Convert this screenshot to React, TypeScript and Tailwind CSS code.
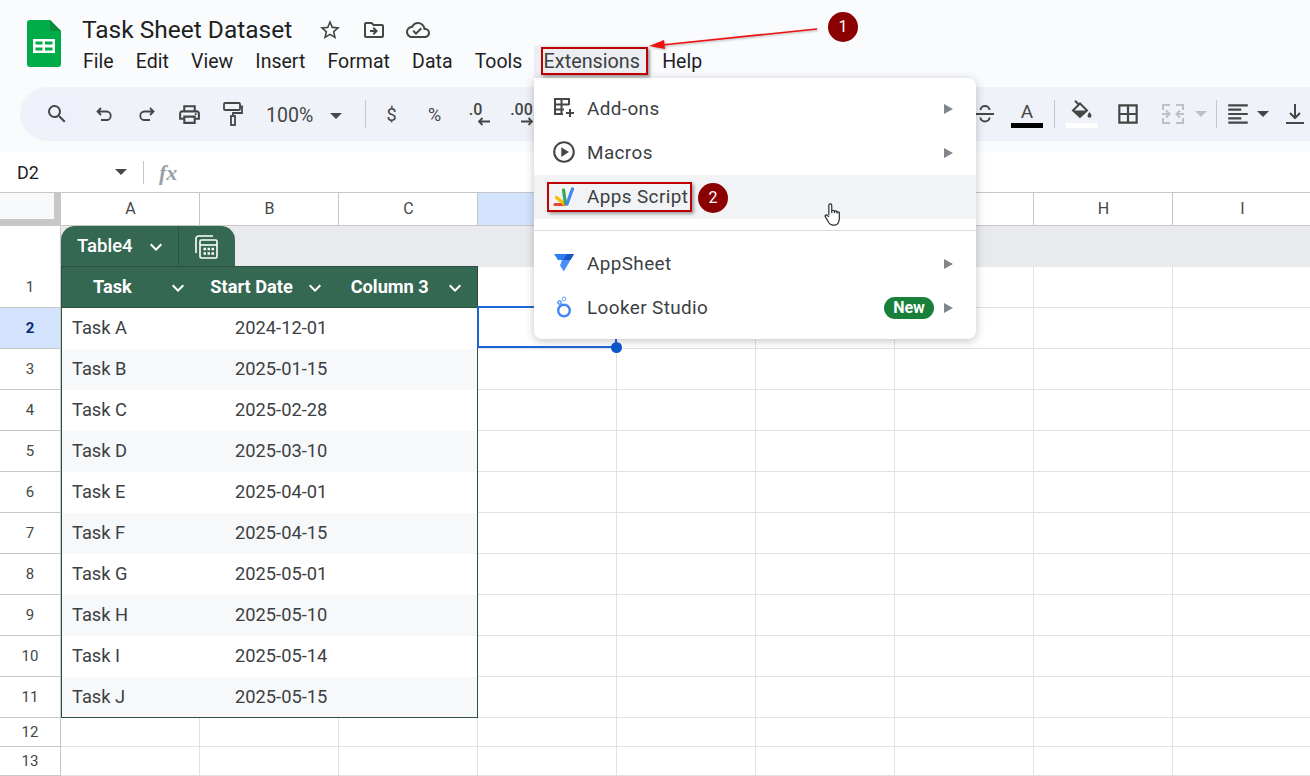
import { ReactNode } from "react";
import {
  MdBorderAll,
  MdFormatAlignLeft,
  MdKeyboardArrowDown,
  MdOutlineCloudDone,
  MdOutlineDriveFileMove,
  MdOutlinePrint,
  MdOutlinePlayCircle,
  MdSearch,
  MdStarBorder,
} from "react-icons/md";

const menus = ["File", "Edit", "View", "Insert", "Format", "Data", "Tools"];
const tasks = [
  ["Task A", "2024-12-01"],
  ["Task B", "2025-01-15"],
  ["Task C", "2025-02-28"],
  ["Task D", "2025-03-10"],
  ["Task E", "2025-04-01"],
  ["Task F", "2025-04-15"],
  ["Task G", "2025-05-01"],
  ["Task H", "2025-05-10"],
  ["Task I", "2025-05-14"],
  ["Task J", "2025-05-15"],
];

function Caret({ className = "" }: { className?: string }) {
  return (
    <svg width="12" height="6" viewBox="0 0 12 6" className={className}>
      <path d="M0 0h12L6 6z" fill="currentColor" />
    </svg>
  );
}

function SubArrow() {
  return (
    <svg width="9" height="10" viewBox="0 0 9 10" className="mt-px shrink-0">
      <path d="M0 0l9 5-9 5z" fill="#80868b" />
    </svg>
  );
}

function SheetsLogo() {
  return (
    <svg width="34" height="47" viewBox="0 0 34 47">
      <path d="M3 0h20l11 11v33a3 3 0 0 1-3 3H3a3 3 0 0 1-3-3V3a3 3 0 0 1 3-3z" fill="#00ac47" />
      <path d="M23 0l11 11H23z" fill="#0a8a3c" />
      <path d="M6 19h22v14H6z" fill="#fff" />
      <path d="M8.500 21.500h7v3h-7zM18 21.500h7.500v3H18zM8.500 27.500h7v3h-7zM18 27.500h7.500v3H18z" fill="#00ac47" />
    </svg>
  );
}

function AddonsIcon() {
  return (
    <svg width="22" height="22" viewBox="0 0 22 22" fill="none" stroke="#444746" strokeWidth="2">
      <path d="M16 8V2H2v15h8M2 7.500h14M2 12.500h9M8.500 2v15" />
      <path d="M17 12v8M13 16h8" />
    </svg>
  );
}

function AppsScriptLogo() {
  return (
    <svg width="22" height="20" viewBox="0 0 22 20" fill="none" strokeWidth="3.200" strokeLinecap="round">
      <path d="M2 17.500h10" stroke="#ea4335" />
      <path d="M3.500 10.500l8.500 7" stroke="#fbbc04" />
      <path d="M10.500 3l2 14" stroke="#34a853" />
      <path d="M19.500 2l-5.500 15" stroke="#4285f4" />
    </svg>
  );
}

function AppSheetLogo() {
  return (
    <svg width="20" height="18" viewBox="0 0 20 18">
      <path d="M0 0h20l-3.500 6H4z" fill="#2f7df6" />
      <path d="M13 0h7l-3.500 6H9z" fill="#1a56c4" />
      <path d="M8 6h8.500L9.800 17.500 6 11.500z" fill="#4a90f7" />
    </svg>
  );
}

function LookerLogo() {
  return (
    <svg width="16" height="22" viewBox="0 0 16 22" fill="none">
      <circle cx="8" cy="14.500" r="5.800" stroke="#4285f4" strokeWidth="2.400" />
      <circle cx="8" cy="3" r="1.800" stroke="#8ab4f8" strokeWidth="1.200" />
      <circle cx="3.600" cy="6.500" r="1.700" stroke="#4285f4" strokeWidth="1.300" />
    </svg>
  );
}

function MergeIcon() {
  return (
    <svg width="22" height="20" viewBox="0 0 22 20" fill="none" stroke="#bdc1c6" strokeWidth="2">
      <path d="M8 1H1v5M1 14v5h7M14 1h7v5M21 14v5h-7" />
      <path d="M0 10h7M4 6.500L7.500 10 4 13.500M22 10h-7M18 6.500L14.500 10l3.500 3.500" />
    </svg>
  );
}

function TableIcon() {
  return (
    <svg width="23" height="24" viewBox="0 0 23 24" fill="none" stroke="#fff" strokeWidth="1.600">
      <path d="M1 18V3.500A2.500 2.500 0 0 1 3.500 1H18" />
      <rect x="5" y="5" width="17" height="18" rx="1.500" />
      <path d="M5 10h17" />
      <path d="M8.500 14h2.500M12.500 14h2.500M16.500 14h2.500M8.500 18.500h2.500M12.500 18.500h2.500M16.500 18.500h2.500" strokeWidth="2.400" />
    </svg>
  );
}

function UndoIcon({ flip }: { flip?: boolean }) {
  return (
    <svg width="18" height="18" viewBox="0 0 18 18" fill="none" stroke="#444746" strokeWidth="1.800" className={flip ? "-scale-x-100" : ""}>
      <path d="M6 3L2.500 6.500 6 10M2.500 6.500H11.500a4.250 4.250 0 0 1 0 8.500H6" />
    </svg>
  );
}

function PaintIcon() {
  return (
    <svg width="20" height="24" viewBox="0 0 20 24" fill="none" stroke="#444746" strokeWidth="1.800">
      <rect x="1" y="1" width="16" height="7" rx="1" />
      <path d="M17 4.500h2v6.500H10v3" />
      <rect x="8" y="14" width="4" height="9" />
    </svg>
  );
}

function StrikeIcon() {
  return (
    <svg width="18" height="20" viewBox="0 0 18 20" fill="none" stroke="#444746" strokeWidth="2">
      <path d="M4.500 6a4.500 4 0 0 1 9 0M0 10h18M13.500 13.500a4.500 4 0 0 1-9 0" />
    </svg>
  );
}

function FillIcon() {
  return (
    <svg width="22" height="21" viewBox="0 0 22 21">
      <path d="M4 0.800l4 4" fill="none" stroke="#444746" strokeWidth="2" />
      <path d="M9 3.500l7 7-7 6.500-7-6.500z" fill="none" stroke="#444746" strokeWidth="2" />
      <path d="M2.500 10.500h13L9 17z" fill="#444746" />
      <path d="M18.500 12c1 1.600 2 2.600 2 3.800a2 2 0 0 1-4 0c0-1.200 1-2.200 2-3.800z" fill="#444746" />
    </svg>
  );
}

function VAlignIcon() {
  return (
    <svg width="18" height="20" viewBox="0 0 18 20" fill="none" stroke="#444746" strokeWidth="2">
      <path d="M9 0v14M4 9l5 5 5-5M0 19h18" />
    </svg>
  );
}

function HandCursor() {
  return (
    <svg width="16" height="25" viewBox="0 0 16.500 25" className="absolute left-[824px] top-[202px]">
      <path
        d="M5 13V3a1.500 1.500 0 0 1 3 0V11M8 9.500a1.400 1.400 0 0 1 2.800 0V11M10.800 10a1.300 1.300 0 0 1 2.600 0V11.500M13.400 11a1.200 1.200 0 0 1 2.400 0V17c0 3.500-2 6.500-5 6.500H9c-2 0-3-1-4-2.500L1.500 15c-1-1.500.5-2.800 2-1.500L5 15"
        fill="#fff"
        stroke="#1f2733"
        strokeWidth="1.200"
      />
    </svg>
  );
}

function ToolBtn({ children, className = "" }: { children: ReactNode; className?: string }) {
  return (
    <div className={`flex h-full w-[43px] shrink-0 items-center justify-center text-[#444746] ${className}`}>
      {children}
    </div>
  );
}

function DecimalBtn({ label, dir }: { label: string; dir: "left" | "right" }) {
  return (
    <ToolBtn>
      <div className="flex flex-col items-end pl-[2px]">
        <span className={`text-[16px] font-medium leading-[14px] ${dir === "left" ? "mr-[6px]" : ""}`}>{label}</span>
        <svg width="14" height="9" viewBox="0 0 14 9" fill="none" stroke="#444746" strokeWidth="1.800" className={dir === "left" ? "-mr-[3px]" : "-mr-[1px] -scale-x-100"}>
          <path d="M13 4.500H2M5.500 1L2 4.500 5.500 8" />
        </svg>
      </div>
    </ToolBtn>
  );
}

function ToolDivider({ className = "" }: { className?: string }) {
  return <div className={`h-[28px] w-px shrink-0 bg-[#c7c7c7] ${className}`} />;
}

function MenuItem({
  icon,
  label,
  badge,
  arrow,
  active,
}: {
  icon: ReactNode;
  label: string;
  badge?: boolean;
  arrow?: boolean;
  active?: boolean;
}) {
  return (
    <div className={`flex h-[44px] items-center pr-[23px] ${active ? "bg-[#f1f3f4]" : ""}`}>
      <div className="flex w-[53px] shrink-0 items-center justify-center pl-[6px]">{icon}</div>
      <span className={`${active ? "pt-px" : "pt-[3px]"} text-[18.900px] tracking-[0.4px] text-[#3c4043]`}>{label}</span>
      <div className="flex-1" />
      {badge && (
        <span className="mr-[10px] mt-[2px] flex h-[22px] w-[50px] items-center justify-center rounded-full bg-[#188038] text-[16px] font-bold text-white">
          New
        </span>
      )}
      {arrow && <SubArrow />}
    </div>
  );
}

function RowHead({ n, selected }: { n: number; selected?: boolean }) {
  return (
    <div
      className={`flex h-full w-[61px] shrink-0 items-center justify-center border-r border-b border-[#c7c7c7] text-[15px] ${
        selected ? "bg-[#d3e3fd] font-bold text-[#0b2a6b]" : "text-[#444746]"
      }`}
    >
      {n}
    </div>
  );
}

function BlankCells() {
  return (
    <>
      {[0, 1, 2, 3, 4, 5].map((i) => (
        <div key={i} className="h-full w-[139px] shrink-0 border-r border-b border-[#e1e1e1]" />
      ))}
    </>
  );
}

function HeadCell({ label, textClass, chevClass }: { label: string; textClass: string; chevClass: string }) {
  return (
    <div className="relative flex h-full w-[139px] items-center">
      <span className={`text-[18.200px] font-bold text-white ${textClass}`}>{label}</span>
      <MdKeyboardArrowDown size={24} className={`text-white ${chevClass}`} />
    </div>
  );
}

export default function App() {
  return (
    <div className="relative h-[776px] w-[1310px] overflow-hidden bg-white font-[Roboto,sans-serif] text-[#202124]">
      {/* title + menus */}
      <div className="flex h-[87px] bg-[#f9fbfd]">
        <div className="ml-[27px] mt-[20px] shrink-0">
          <SheetsLogo />
        </div>
        <div className="ml-[21px] flex flex-col">
          <div className="mt-[15px] flex h-[30px] items-center">
            <span className="w-[236px] text-[24.500px] leading-none text-[#1f1f1f]">Task Sheet Dataset</span>
            <div className="flex items-center gap-[20px] text-[#444746]">
              <MdStarBorder size={24} />
              <MdOutlineDriveFileMove size={24} />
              <MdOutlineCloudDone size={24} />
            </div>
          </div>
          <div className="ml-px flex h-[33px] items-center gap-[22.200px] text-[19.500px] text-[#1f1f1f]">
            {menus.map((m) => (
              <span key={m}>{m}</span>
            ))}
            <span className="-ml-[11px] -mr-[10px] flex h-full items-center rounded-t bg-[#eceef1] px-[10px] text-[19.800px] text-[#3c4043]">
              Extensions
            </span>
            <span>Help</span>
          </div>
        </div>
      </div>

      {/* toolbar */}
      <div className="bg-[#f9fbfd] pb-[11px] pl-[20px]">
        <div className="flex h-[54px] items-center rounded-l-full bg-[#eff2f8] pl-[11px]">
          <div className="flex h-[38px] w-[51px] shrink-0 items-center justify-center bg-[#eef1f9] text-[#444746]">
            <MdSearch size={24} />
          </div>
          <ToolBtn><UndoIcon /></ToolBtn>
          <ToolBtn><UndoIcon flip /></ToolBtn>
          <ToolBtn><MdOutlinePrint size={25} /></ToolBtn>
          <ToolBtn><PaintIcon /></ToolBtn>
          <div className="flex w-[98px] shrink-0 items-center pl-[12px] text-[19.500px] text-[#444746]">
            <span className="pt-[3px]">100%</span>
            <Caret className="ml-[17px] mt-[3px]" />
          </div>
          <ToolDivider className="ml-[13px]" />
          <ToolBtn className="ml-[4px] text-[18px]">$</ToolBtn>
          <ToolBtn className="text-[18px]">%</ToolBtn>
          <DecimalBtn label=".0" dir="left" />
          <DecimalBtn label=".00" dir="right" />
          <div className="w-[421px] shrink-0" />
          <ToolBtn><StrikeIcon /></ToolBtn>
          <div className="flex h-full w-[42px] shrink-0 flex-col items-center justify-center text-[#444746]">
            <span className="text-[19px] leading-[22px]">A</span>
            <div className="h-[5px] w-[32px] bg-black" />
          </div>
          <ToolDivider className="ml-[6px]" />
          <div className="ml-[11px] flex w-[32px] shrink-0 flex-col items-center">
            <FillIcon />
            <div className="mt-[2px] h-[5px] w-[32px] bg-white" />
          </div>
          <ToolBtn className="ml-[8px]"><MdBorderAll size={26} /></ToolBtn>
          <div className="ml-[13px] flex w-[46px] shrink-0 items-center justify-between text-[#bdc1c6]">
            <MergeIcon />
            <Caret className="mr-[1px]" />
          </div>
          <ToolDivider className="ml-[8px]" />
          <div className="ml-[8px] flex w-[44px] shrink-0 items-center justify-between text-[#444746]">
            <MdFormatAlignLeft size={26} />
            <Caret />
          </div>
          <ToolBtn className="ml-[4px]"><VAlignIcon /></ToolBtn>
        </div>
      </div>

      {/* formula bar */}
      <div className="flex h-[40px] items-center bg-white">
        <span className="ml-[17px] w-[98px] text-[18px] text-[#1f1f1f]">D2</span>
        <Caret className="text-[#444746]" />
        <div className="ml-[16px] h-[23px] w-px bg-[#c7c7c7]" />
        <span className="ml-[15px] font-['Liberation_Serif',serif] text-[22px] font-bold italic text-[#9aa0a6]">fx</span>
      </div>

      {/* column headers, D to G sit behind the open menu */}
      <div className="flex h-[34px] border-y border-[#c7c7c7] text-[16px] text-[#444746]">
        <div className="h-full w-[61px] shrink-0 border-r-[7px] border-b-[6px] border-[#c7c7c7] bg-[#f8f9fa]" />
        {["A", "B", "C"].map((c) => (
          <div key={c} className="flex w-[139px] shrink-0 items-center justify-center border-r border-[#c7c7c7] pl-px">
            {c}
          </div>
        ))}
        <div className="w-[139px] shrink-0 border-r border-[#c7c7c7] bg-[#d3e3fd]" />
        <div className="w-[139px] shrink-0 border-r border-[#c7c7c7]" />
        <div className="w-[139px] shrink-0 border-r border-[#c7c7c7]" />
        <div className="w-[139px] shrink-0 border-r border-[#c7c7c7]" />
        {["H", "I"].map((c) => (
          <div key={c} className="flex w-[139px] shrink-0 items-center justify-center border-r border-[#c7c7c7] pl-px">
            {c}
          </div>
        ))}
      </div>

      {/* table name row */}
      <div className="flex h-[41px]">
        <div className="h-full w-[61px] shrink-0 border-r border-[#c7c7c7]" />
        <div className="flex-1 bg-[#e8eaed]">
          <div className="flex h-full w-[174px] items-center rounded-t-[14px] bg-[#356853] text-white">
            <span className="ml-[16px] text-[18.500px] font-medium">Table4</span>
            <MdKeyboardArrowDown size={24} className="ml-[11px]" />
            <div className="ml-[10px] h-full w-px bg-[#2a5341]" />
            <div className="flex flex-1 items-center justify-center">
              <TableIcon />
            </div>
          </div>
        </div>
      </div>

      {/* sheet rows */}
      <div className="flex h-[41px]">
        <RowHead n={1} />
        <div className="-mt-px flex h-[42px] w-[417px] shrink-0 border border-[#2d4f40] bg-[#356853]">
          <HeadCell label="Task" textClass="ml-[31px]" chevClass="absolute left-[104px] top-[9px]" />
          <HeadCell label="Start Date" textClass="ml-[10px]" chevClass="absolute left-[103px] top-[9px]" />
          <HeadCell label="Column 3" textClass="ml-[12px]" chevClass="absolute left-[104px] top-[9px]" />
        </div>
        <BlankCells />
      </div>
      {tasks.map(([name, date], i) => (
        <div key={name} className="flex h-[41px]">
          <RowHead n={i + 2} selected={i === 0} />
          <div
            className={`flex h-full w-[417px] shrink-0 items-center border-x border-[#2d4f40] text-[18.300px] text-[#3c4043] ${
              i % 2 ? "bg-[#f6f8f9]" : "bg-white"
            } ${i === 9 ? "border-b pb-px" : "pb-[2px]"}`}
          >
            <span className="w-[173px] pl-[10px]">{name}</span>
            <span>{date}</span>
          </div>
          <BlankCells />
        </div>
      ))}
      {[12, 13].map((n) => (
        <div key={n} className="flex h-[29px]">
          <RowHead n={n} />
          <div className="h-full w-[139px] shrink-0 border-r border-b border-[#e1e1e1]" />
          <div className="h-full w-[139px] shrink-0 border-r border-b border-[#e1e1e1]" />
          <div className="h-full w-[139px] shrink-0 border-r border-b border-[#e1e1e1]" />
          <BlankCells />
        </div>
      ))}

      {/* selected cell */}
      <div className="absolute left-[477px] top-[306px] h-[42px] w-[140px] border-2 border-[#1a66d2]">
        <div className="absolute -bottom-[7px] -right-[7px] h-[11px] w-[11px] rounded-full bg-[#0b57d0]" />
      </div>

      {/* Extensions menu */}
      <div className="absolute left-[534px] top-[78px] h-[261px] w-[442px] rounded-b-lg rounded-tr-lg bg-white pt-[8px] shadow-[0_2px_10px_rgba(60,64,67,0.3)]">
        <MenuItem icon={<AddonsIcon />} label="Add-ons" arrow />
        <MenuItem icon={<MdOutlinePlayCircle size={26} className="text-[#444746]" />} label="Macros" arrow />
        <div className="mt-px">
          <MenuItem icon={<AppsScriptLogo />} label="Apps Script" active />
        </div>
        <div className="mb-[10px] mt-[11px] h-px bg-[#dadce0]" />
        <MenuItem icon={<AppSheetLogo />} label="AppSheet" arrow />
        <MenuItem icon={<LookerLogo />} label="Looker Studio" badge arrow />
      </div>

      {/* annotations */}
      <div className="absolute left-[541px] top-[47px] h-[28px] w-[107px] border-2 border-[#c00000] shadow-[2px_2px_3px_rgba(0,0,0,0.35)]" />
      <div className="absolute left-[547px] top-[182px] h-[30px] w-[145px] border-2 border-[#c00000] shadow-[2px_2px_3px_rgba(0,0,0,0.35)]" />
      <svg className="absolute left-[640px] top-[20px] drop-shadow-[1px_1px_1px_rgba(0,0,0,0.3)]" width="190" height="36" viewBox="0 0 190 36">
        <path d="M177 9L22 25" stroke="#f01010" strokeWidth="1.600" />
        <path d="M9 26l15-6 1 9z" fill="#f01010" />
      </svg>
      <div className="absolute left-[828px] top-[12px] flex h-[30px] w-[30px] items-center justify-center rounded-full bg-[#8b0000] text-[16px] text-white">
        1
      </div>
      <div className="absolute left-[698px] top-[183px] flex h-[30px] w-[30px] items-center justify-center rounded-full bg-[#8b0000] text-[16px] text-white">
        2
      </div>
      <HandCursor />
    </div>
  );
}
